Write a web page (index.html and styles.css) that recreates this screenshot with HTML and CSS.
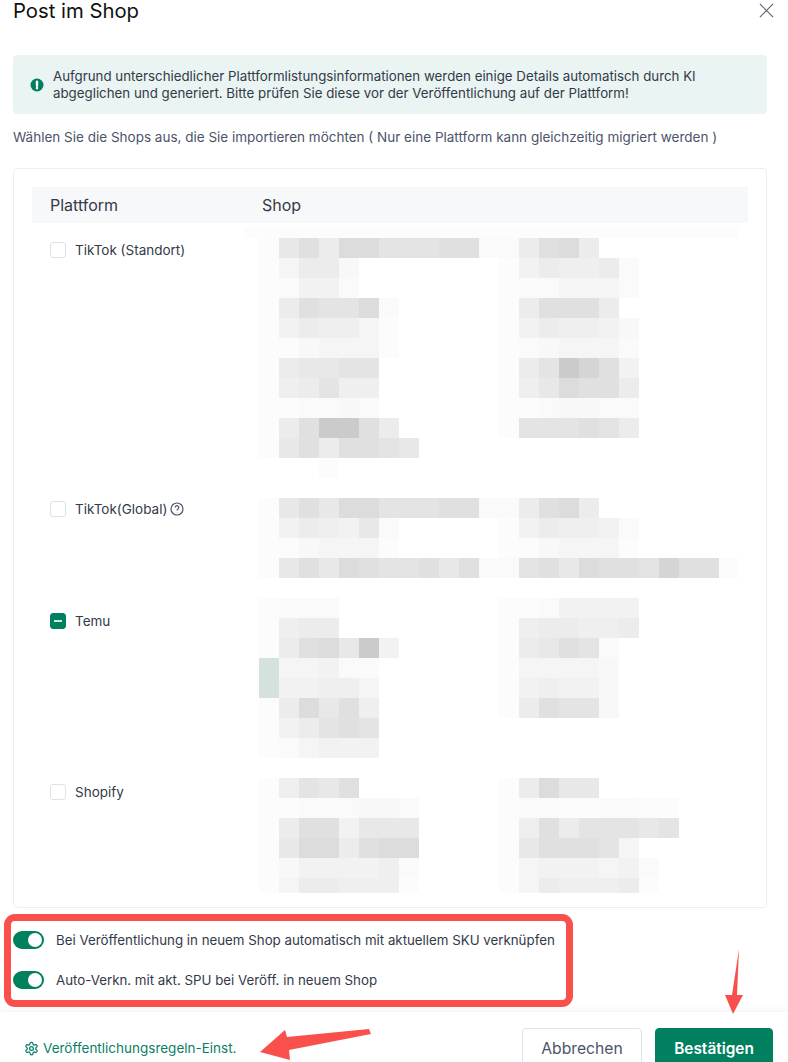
FILE: index.html
```html
<!DOCTYPE html>
<html lang="de">
<head>
    <meta charset="UTF-8">
    <meta name="viewport" content="width=device-width, initial-scale=1.0">
    <title>Post im Shop</title>
    <link rel="stylesheet" href="styles.css">
</head>
<body>

<div class="modal">
    <div class="content">
        <div class="modal-header">
            <h1>Post im Shop</h1>
            <svg class="close" viewBox="0 0 16 16"><path d="M1 1l14 14M15 1L1 15"/></svg>
        </div>

        <div class="alert">
            <svg class="alert-icon" viewBox="0 0 14 14">
                <circle cx="7" cy="7" r="6.5"/>
                <path d="M7 3.6v3.8M7 9.8v.4"/>
            </svg>
            <p>Aufgrund unterschiedlicher Plattformlistungsinformationen werden einige Details automatisch durch KI abgeglichen und generiert. Bitte prüfen Sie diese vor der Veröffentlichung auf der Plattform!</p>
        </div>

        <p class="intro">Wählen Sie die Shops aus, die Sie importieren möchten ( Nur eine Plattform kann gleichzeitig migriert werden )</p>

        <div class="card">
            <div class="table-head">
                <div class="col-platform">Plattform</div>
                <div>Shop</div>
            </div>
            <div class="table-body">
                <div class="platform-row row-standort">
                    <span class="checkbox"></span>
                    <span>TikTok (Standort)</span>
                </div>
                <div class="platform-row row-global">
                    <span class="checkbox"></span>
                    <span>TikTok(Global)</span>
                    <svg class="help" viewBox="0 0 14 14">
                        <circle cx="7" cy="7" r="6"/>
                        <path d="M5.2 5.5a1.8 1.8 0 1 1 2.8 1.5c-.7.4-1 .8-1 1.5M7 10.2v.4"/>
                    </svg>
                </div>
                <div class="platform-row row-temu">
                    <span class="checkbox checked"></span>
                    <span>Temu</span>
                </div>
                <div class="platform-row">
                    <span class="checkbox"></span>
                    <span>Shopify</span>
                </div>
                <!-- verpixelte Shopnamen -->
                <div class="mosaic-band"></div>
                <div class="mosaic" id="mosaic"></div>
            </div>
        </div>

        <div class="switches">
            <div class="switch-row">
                <span class="switch"></span>
                <span>Bei Veröffentlichung in neuem Shop automatisch mit aktuellem SKU verknüpfen</span>
            </div>
            <div class="switch-row">
                <span class="switch"></span>
                <span>Auto-Verkn. mit akt. SPU bei Veröff. in neuem Shop</span>
            </div>
        </div>
    </div>

    <div class="modal-footer">
        <a class="rules-link">
            <svg class="gear" viewBox="0 0 24 24">
                <path d="M12.22 2h-.44a2 2 0 0 0-2 2v.18a2 2 0 0 1-1 1.73l-.43.25a2 2 0 0 1-2 0l-.15-.08a2 2 0 0 0-2.73.73l-.22.38a2 2 0 0 0 .73 2.73l.15.1a2 2 0 0 1 1 1.72v.51a2 2 0 0 1-1 1.74l-.15.09a2 2 0 0 0-.73 2.73l.22.38a2 2 0 0 0 2.73.73l.15-.08a2 2 0 0 1 2 0l.43.25a2 2 0 0 1 1 1.73V20a2 2 0 0 0 2 2h.44a2 2 0 0 0 2-2v-.18a2 2 0 0 1 1-1.73l.43-.25a2 2 0 0 1 2 0l.15.08a2 2 0 0 0 2.73-.73l.22-.39a2 2 0 0 0-.73-2.73l-.15-.08a2 2 0 0 1-1-1.74v-.5a2 2 0 0 1 1-1.74l.15-.09a2 2 0 0 0 .73-2.73l-.22-.38a2 2 0 0 0-2.73-.73l-.15.08a2 2 0 0 1-2 0l-.43-.25a2 2 0 0 1-1-1.73V4a2 2 0 0 0-2-2z"/>
                <circle cx="12" cy="12" r="3"/>
            </svg>
            Veröffentlichungsregeln-Einst.
        </a>
        <div class="footer-buttons">
            <button class="btn">Abbrechen</button>
            <button class="btn btn-primary">Bestätigen</button>
        </div>
    </div>

    <!-- Markierungen im Screenshot -->
    <div class="mark-box"></div>
    <svg class="mark-arrows" viewBox="0 0 788 1062">
        <path d="M739 949L737 995H743L733 1014L725 995H732Z"/>
        <path d="M369 1029L287 1037L285 1030L260 1052L290 1060L289 1050L371 1034Z"/>
    </svg>
</div>

<script src="script.js"></script>
</body>
</html>
```

FILE: styles.css
```css
* {
    box-sizing: border-box;
}

html, body {
    margin: 0;
    padding: 0;
    height: 100%;
    overflow: hidden;
}

body {
    font-family: Inter, "Noto Sans", sans-serif;
    font-size: 14px;
    color: #333a48;
    background-color: #fff;
}

.modal {
    position: relative;
    height: 1062px;
    overflow: hidden;
}

.content {
    padding: 0 21px 0 13px;
}

.modal-header {
    display: flex;
    justify-content: space-between;
    height: 22px;
    margin-right: -7px;
}

h1 {
    margin: 0;
    font-size: 20.3px;
    font-weight: 400;
    line-height: 22px;
    color: #111;
}

.close {
    width: 15px;
    height: 15px;
    margin-top: 3px;
    fill: none;
    stroke: #5b6170;
    stroke-width: 1.2;
}

.alert {
    display: flex;
    align-items: center;
    gap: 9px;
    height: 59px;
    margin-top: 33px;
    padding: 0 17px;
    background-color: #eaf4f2;
    border-radius: 4px;
}

.alert p {
    margin: 0;
    font-size: 13.3px;
    line-height: 17px;
    color: #333a48;
}

.alert-icon {
    flex: none;
    width: 14px;
    height: 14px;
}

.alert-icon circle {
    fill: #00805f;
}

.alert-icon path {
    fill: none;
    stroke: #fff;
    stroke-width: 2.4;
    stroke-linecap: round;
}

.intro {
    margin: 13px 0 21px;
    font-size: 13.5px;
    line-height: 20px;
    color: #4b5468;
}

.card {
    height: 740px;
    padding: 18px;
    border: 1px solid #eceef3;
    border-radius: 4px;
}

.table-head {
    display: flex;
    align-items: center;
    height: 36px;
    font-size: 16px;
    background-color: #f7f8fa;
}

.col-platform {
    width: 230px;
    padding-left: 18px;
}

.table-body {
    position: relative;
    padding: 19px 0 0 18px;
}

.platform-row {
    display: flex;
    align-items: center;
    height: 16px;
    font-size: 13.5px;
}

.row-standort {
    margin-bottom: 243px;
}

.row-global {
    margin-bottom: 96px;
}

.row-temu {
    margin-bottom: 155px;
}

.checkbox {
    flex: none;
    position: relative;
    width: 16px;
    height: 16px;
    margin-right: 9px;
    background-color: #fff;
    border: 1px solid #dfe1e8;
    border-radius: 3px;
}

.checkbox.checked {
    background-color: #00805f;
    border-color: #00805f;
}

.checkbox.checked::after {
    content: "";
    position: absolute;
    left: 3px;
    top: 6px;
    width: 8px;
    height: 2px;
    background-color: #cfe6de;
}

.help {
    width: 14px;
    height: 14px;
    margin-left: 3px;
    fill: none;
    stroke: #4b5468;
    stroke-width: 1.2;
}

.mosaic {
    position: absolute;
    left: 227px;
    top: 15px;
    display: grid;
    grid-template-columns: repeat(24, 20px);
    grid-auto-rows: 20px;
    height: 655px;
    overflow: hidden;
    filter: blur(0.5px);
}

.mosaic-band {
    position: absolute;
    left: 212px;
    top: 5px;
    width: 494px;
    height: 10px;
    background-color: #fcfcfc;
}

.switches {
    display: flex;
    flex-direction: column;
    gap: 22px;
    margin-top: 23px;
    padding-bottom: 23px;
}

.switch-row {
    display: flex;
    align-items: center;
    gap: 12px;
    height: 18px;
    font-size: 13.3px;
}

.switch {
    flex: none;
    position: relative;
    width: 31px;
    height: 18px;
    background-color: #00805f;
    border-radius: 9px;
}

.switch::after {
    content: "";
    position: absolute;
    right: 2px;
    top: 2px;
    width: 14px;
    height: 14px;
    background-color: #fff;
    border-radius: 50%;
}

.modal-footer {
    display: flex;
    justify-content: space-between;
    align-items: center;
    padding: 16px 15px 0 24px;
    background-color: #fff;
    box-shadow: 0 -3px 5px rgba(0, 0, 0, 0.04);
}

.rules-link {
    display: flex;
    align-items: center;
    gap: 4px;
    font-size: 13.5px;
    color: #0a7f66;
}

.gear {
    width: 15px;
    height: 15px;
    fill: none;
    stroke: #0a7f66;
    stroke-width: 2;
    stroke-linejoin: round;
}

.footer-buttons {
    display: flex;
    gap: 13px;
}

.btn {
    width: 120px;
    height: 40px;
    font-family: inherit;
    font-size: 15.7px;
    color: #4b5468;
    background-color: #fff;
    border: 1px solid #dfe2ea;
    border-radius: 4px;
}

.btn-primary {
    width: 118px;
    font-size: 15.4px;
    font-weight: 600;
    color: #fff;
    background-color: #00805f;
    border-color: #00805f;
}

.mark-box {
    position: absolute;
    left: 4px;
    top: 914px;
    width: 569px;
    height: 93px;
    border: 7px solid #f9504c;
    border-radius: 11px;
}

.mark-arrows {
    position: absolute;
    left: 0;
    top: 0;
    width: 788px;
    height: 1062px;
    fill: #f9504c;
}
```

FILE: script.js
```js
// Graustufen der verpixelten Zellen
const shades = {
    '0': '#cbcbcb', '1': '#d5d5d5', '2': '#dcdcdc', '3': '#e0e0e0', '4': '#e4e4e4',
    '5': '#e8e8e8', '6': '#ececec', '7': '#efefef', '8': '#f2f2f2', '9': '#f5f5f5',
    'a': '#f8f8f8', 'b': '#fafafa', 'c': '#fcfcfc', 'g': '#d5e1dc'
};

// Eine Zeile = 20px, linke Spalte 12 Zellen | rechte Spalte 12 Zellen
const rows = [
    'c53622444 33b|b6326',
    'c966a|c86776b',
    'cb88b|cbb999b',
    'c63442b|c63336',
    'c86779c|c86778a',
    'cca999c|cba999b',
    'c65544|c640138',
    'c76477|c752336',
    'ccbbab|ccbaabb',
    'c630036|c444346',
    'c5363345|',
    '...c|',
    '|',
    'c53522444 33b|b6326',
    'c86785b|c86778b',
    'cca999c|cca999c',
    'c53523443 53b|b43523341 33c',
    '|',
    'cbbb|ccb8888',
    'c766|c766776',
    'c632508|c6534b',
    'g998bb|c9999a',
    'g88779|c8788a',
    'c62537|c6344a',
    'c86434|',
    'cb9888|',
    '|',
    'c7453|c6255',
    'ccbbbaab|cbbccbbcc',
    'c6338555|c73644454',
    'c5226322|c533349',
    'ca88887b|c988898b',
    'c966777c|c967776c'
];

const mosaic = document.getElementById('mosaic');

rows.forEach(row => {
    const [left, right] = row.replace(/ /g, '').split('|');
    const cells = left.padEnd(12, '.') + right.padEnd(12, '.');
    for (const cell of cells) {
        const el = document.createElement('div');
        if (shades[cell]) {
            el.style.backgroundColor = shades[cell];
        }
        mosaic.appendChild(el);
    }
});
```
